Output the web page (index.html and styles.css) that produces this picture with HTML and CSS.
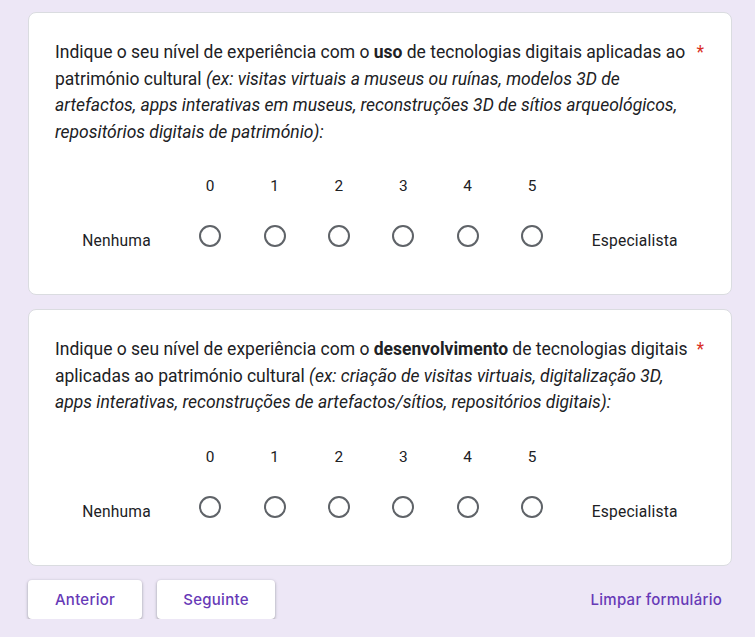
FILE: index.html
```html
<!DOCTYPE html>
<html lang="pt">
<head>
<meta charset="utf-8">
<link rel="stylesheet" href="styles.css">
</head>
<body>
<div class="page">
  <div class="card">
    <div class="title"><div class="title-text">Indique o seu nível de experiência com o <b>uso</b> de tecnologias digitais aplicadas ao património cultural <i>(ex: visitas virtuais a museus ou ruínas, modelos 3D de artefactos, apps interativas em museus, reconstruções 3D de sítios arqueológicos, repositórios digitais de património):</i></div><span class="req">*</span></div>
    <div class="scale">
      <div></div>
      <div class="num">0</div><div class="num">1</div><div class="num">2</div><div class="num">3</div><div class="num">4</div><div class="num">5</div>
      <div></div>
      <div class="lbl">Nenhuma</div>
      <div class="rc"><span class="radio"></span></div>
      <div class="rc"><span class="radio"></span></div>
      <div class="rc"><span class="radio"></span></div>
      <div class="rc"><span class="radio"></span></div>
      <div class="rc"><span class="radio"></span></div>
      <div class="rc"><span class="radio"></span></div>
      <div class="lbl">Especialista</div>
    </div>
  </div>
  <div class="card">
    <div class="title"><div class="title-text">Indique o seu nível de experiência com o <b>desenvolvimento</b> de tecnologias digitais aplicadas ao património cultural <i>(ex: criação de visitas virtuais, digitalização 3D, apps interativas, reconstruções de artefactos/sítios, repositórios digitais):</i></div><span class="req">*</span></div>
    <div class="scale">
      <div></div>
      <div class="num">0</div><div class="num">1</div><div class="num">2</div><div class="num">3</div><div class="num">4</div><div class="num">5</div>
      <div></div>
      <div class="lbl">Nenhuma</div>
      <div class="rc"><span class="radio"></span></div>
      <div class="rc"><span class="radio"></span></div>
      <div class="rc"><span class="radio"></span></div>
      <div class="rc"><span class="radio"></span></div>
      <div class="rc"><span class="radio"></span></div>
      <div class="rc"><span class="radio"></span></div>
      <div class="lbl">Especialista</div>
    </div>
  </div>
  <div class="actions">
    <button class="btn">Anterior</button>
    <button class="btn btn-wide">Seguinte</button>
    <span class="spacer"></span>
    <button class="link">Limpar formulário</button>
  </div>
</div>
</body>
</html>
```
FILE: styles.css
```css
html, body {
  margin: 0;
  padding: 0;
  background: #ede7f6;
  font-family: Roboto, "Liberation Sans", sans-serif;
  color: #202124;
}
.page {
  width: 704px;
  margin-left: 28px;
  padding-top: 12px;
  display: flex;
  flex-direction: column;
  gap: 14px;
}
.card {
  background: #fff;
  border: 1px solid #dadce0;
  border-radius: 8px;
  padding: 26.4px 26px 21px 26px;
}
.title {
  display: flex;
  align-items: flex-start;
  font-size: 17.5px;
  line-height: 26.4px;
}
.title-text {
  flex: 1;
  min-width: 0;
}
.title b { font-weight: 700; }
.req {
  color: #d93025;
  margin-left: 6px;
  margin-right: 1px;
}
.scale {
  display: grid;
  grid-template-columns: 123px repeat(6, 64.4px) 1fr;
  grid-template-rows: 26px 74px;
  margin-top: 28px;
  align-items: center;
  justify-items: center;
  font-size: 15.4px;
  letter-spacing: 0.2px;
}
.lbl { padding-top: 10px; font-size: 15.6px; }
.radio {
  display: block;
  width: 18px;
  height: 18px;
  border: 2px solid #5f6368;
  border-radius: 50%;
}
.actions {
  display: flex;
  align-items: center;
  gap: 15px;
}
.btn {
  width: 114px;
  height: 39px;
  background: #fff;
  border: none;
  border-radius: 4px;
  box-shadow: 0 1px 2px rgba(60,64,67,.3), 0 1px 3px 1px rgba(60,64,67,.15);
  color: #673ab7;
  font-family: Inter, Roboto, sans-serif;
  font-weight: 500;
  font-size: 15px;
  letter-spacing: 0.25px;
}
.btn-wide { width: 118px; }
.spacer { flex: 1; }
.link {
  background: none;
  border: none;
  padding: 0 10px 0 0;
  color: #673ab7;
  font-family: Inter, Roboto, sans-serif;
  font-weight: 500;
  font-size: 15px;
  letter-spacing: 0.25px;
}
```
